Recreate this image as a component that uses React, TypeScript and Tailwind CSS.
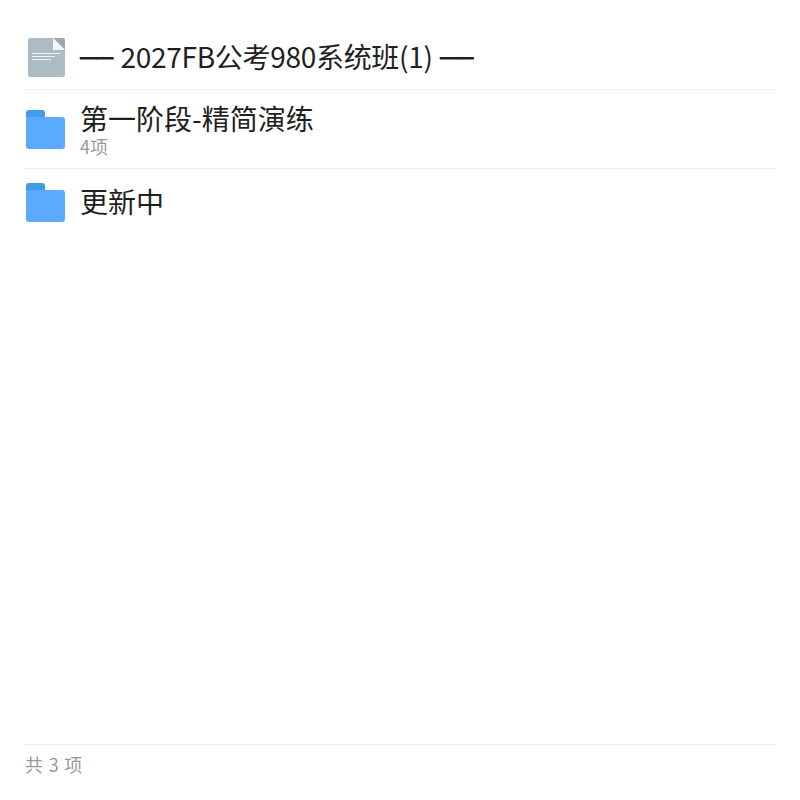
const font = { fontFamily: '"Noto Sans CJK SC", sans-serif' };
const dash = { fontFamily: '"DejaVu Sans", sans-serif' };

function FileIcon() {
  return (
    <svg width="37" height="39" viewBox="0 0 37 39" className="shrink-0">
      <path d="M2 0H25L37 12V37a2 2 0 0 1-2 2H2a2 2 0 0 1-2-2V2a2 2 0 0 1 2-2Z" fill="#adbcc4" />
      <path d="M25 0H35a2 2 0 0 1 2 2V12Z" fill="#9aa9b1" />
      <path d="M25 0L37 12H25Z" fill="#f4f6f7" />
      <rect x="4" y="15" width="28" height="1" fill="#f1f4f5" />
      <rect x="4" y="18" width="23" height="1" fill="#f1f4f5" />
      <rect x="4" y="21" width="19" height="1" fill="#f1f4f5" />
    </svg>
  );
}

function FolderIcon() {
  return (
    <svg width="39" height="39" viewBox="0 0 39 39" className="shrink-0">
      <path d="M0 3a3 3 0 0 1 3-3h13a3 3 0 0 1 3 3v5H0Z" fill="#3f9ce9" />
      <rect x="0" y="7" width="39" height="32" rx="3" fill="#5aabff" />
    </svg>
  );
}

export default function App() {
  return (
    <div style={font} className="flex h-[800px] w-[800px] flex-col bg-white px-6">
      <div className="mt-[26px] flex h-[64px] items-start border-b border-[#eeeeee]">
        <div className="ml-[4px] mt-[12px]">
          <FileIcon />
        </div>
        <span className="ml-[15px] mt-[9px] whitespace-nowrap text-[28px] leading-[42px] tracking-[-0.3px] [word-spacing:1.5px] text-[#1f1f1f]">
          <span style={dash}>──</span> 2027FB公考980系统班(1) <span style={dash}>──</span>
        </span>
      </div>
      <div className="flex h-[79px] items-center border-b border-[#eeeeee]">
        <div className="ml-[2px]">
          <FolderIcon />
        </div>
        <div className="ml-[15px] flex flex-col">
          <span className="text-[28px] leading-[32px] text-[#1f1f1f]">第一阶段-精简演练</span>
          <span className="mt-px text-[18px] leading-[22px] text-[#999999]">4项</span>
        </div>
      </div>
      <div className="flex h-[67px] items-center">
        <div className="ml-[2px]">
          <FolderIcon />
        </div>
        <span className="mb-[3px] ml-[15px] text-[28px] leading-[32px] text-[#1f1f1f]">更新中</span>
      </div>
      <div className="mt-auto h-[56px] border-t border-[#eeeeee]">
        <p className="ml-px mt-[6px] text-[18px] leading-[27px] tracking-[0.8px] text-[#999999]">共 3 项</p>
      </div>
    </div>
  );
}
